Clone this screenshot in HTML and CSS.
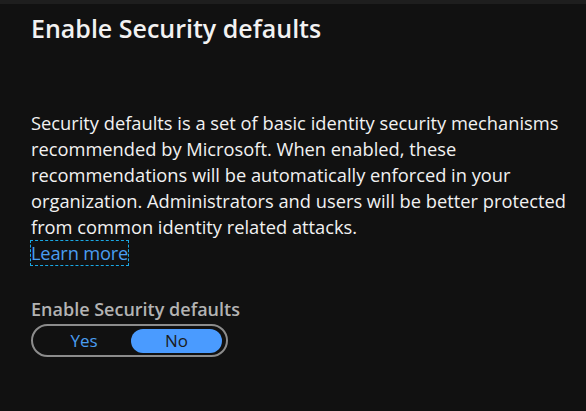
FILE: index.html
```html
<!DOCTYPE html>
<html>
<head>
<meta charset="utf-8">
<link rel="stylesheet" href="styles.css">
</head>
<body>
<div class="topbar"></div>
<main class="panel">
  <h1 class="title">Enable Security defaults</h1>
  <p class="desc">Security defaults is a set of basic identity security mechanisms recommended by Microsoft. When enabled, these recommendations will be automatically enforced in your organization. Administrators and users will be better protected from common identity related attacks.<br><a class="learn" href="#">Learn more</a></p>
  <div class="field">
    <div class="label">Enable Security defaults</div>
    <div class="toggle">
      <span class="opt">Yes</span>
      <span class="opt active">No</span>
    </div>
  </div>
</main>
</body>
</html>
```
FILE: styles.css
```css
html, body {
  margin: 0;
  padding: 0;
  background: #111111;
  height: 100%;
}
body {
  font-family: "Open Sans", "Noto Sans", sans-serif;
  color: #f2f2f2;
}
.topbar {
  height: 4px;
  background: #1e1e1e;
}
.panel {
  padding: 0 10px 0 31px;
}
.title {
  margin: 7px 0 0;
  font-size: 25px;
  font-weight: 600;
  line-height: 34px;
  color: #f2f2f2;
}
.desc {
  margin: 65px 0 0;
  font-size: 18.3px;
  line-height: 26px;
  max-width: 545px;
}
.learn {
  color: #4a9df0;
  text-decoration: none;
  outline: 1px dashed #1aa9e6;
  outline-offset: 0;
  display: inline-block;
  line-height: 24px;
  letter-spacing: -0.2px;
}
.field {
  margin-top: 31px;
}
.label {
  font-size: 18px;
  font-weight: 600;
  color: #b3b3b3;
  line-height: 24px;
}
.toggle {
  margin-top: 3px;
  height: 29px;
  width: 185px;
  border: 2px solid #8c8c8c;
  border-radius: 17px;
  display: flex;
  align-items: center;
  padding: 0 4px;
  box-sizing: content-box;
}
.opt {
  flex: 1;
  height: 24px;
  line-height: 24px;
  text-align: center;
  font-size: 17px;
  color: #4a9df0;
  border-radius: 12px;
}
.opt.active {
  flex: 0 0 91px;
  background: #4a9bff;
  color: #1b1b1b;
}
```
